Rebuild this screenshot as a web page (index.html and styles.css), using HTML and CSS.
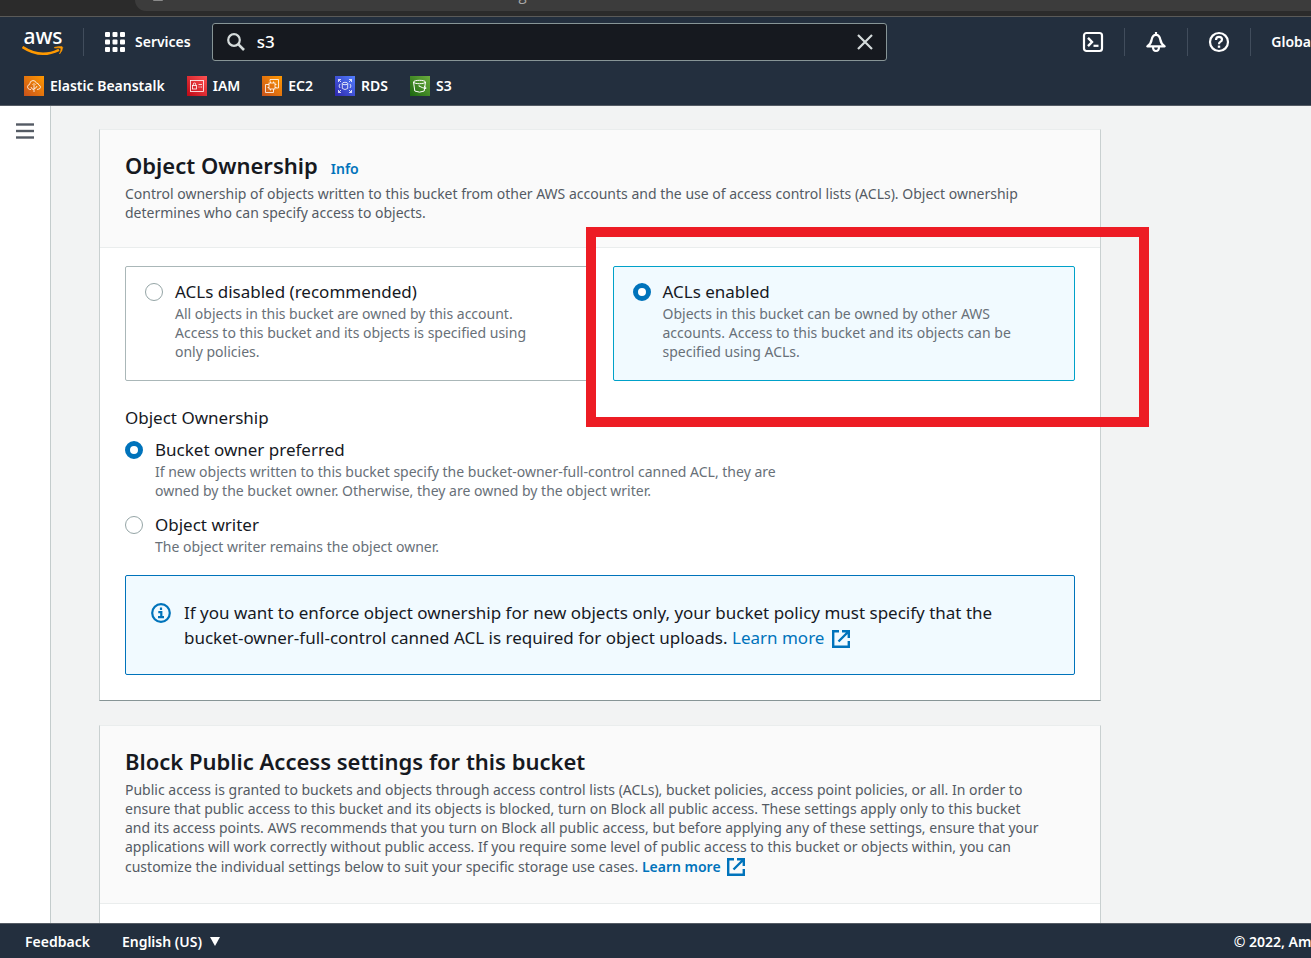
FILE: index.html
```html
<!DOCTYPE html>
<html lang="en">
<head>
<meta charset="utf-8">
<title>Create bucket - S3</title>
<link rel="stylesheet" href="styles.css">
</head>
<body>
<div class="browser-bar">
  <div class="address">
    <svg class="lock" width="10" height="14" viewBox="0 0 10 14"><rect y="5" width="10" height="9" rx="1" fill="#8a8a8a"/></svg>
    <span class="url">s3.console.aws.amazon.com/s3/bucket/create?region=</span>
  </div>
</div>

<header class="top">
  <div class="nav">
    <a class="logo" href="#" aria-label="AWS home">
      <span class="logo-text">aws</span>
      <svg class="smile" width="42" height="11" viewBox="0 0 42 11"><path d="M.5 1Q18.500 13 37 3.800" fill="none" stroke="#f90" stroke-width="2.600"/><path d="M32.500 1.300Q40.500-.5 40.700 1.300Q40.700 4.500 37.500 8Q39.500 3 38.800 2.200Q38 1.500 32.500 2z" fill="#f90" stroke="#f90" stroke-width=".6"/></svg>
    </a>
    <span class="rule"></span>
    <button class="services" type="button">
      <svg width="20" height="20" viewBox="0 0 20 20" fill="#fff"><rect width="5" height="5" rx="1"/><rect x="7.500" width="5" height="5" rx="1"/><rect x="15" width="5" height="5" rx="1"/><rect y="7.500" width="5" height="5" rx="1"/><rect x="7.500" y="7.500" width="5" height="5" rx="1"/><rect x="15" y="7.500" width="5" height="5" rx="1"/><rect y="15" width="5" height="5" rx="1"/><rect x="7.500" y="15" width="5" height="5" rx="1"/><rect x="15" y="15" width="5" height="5" rx="1"/></svg>
      Services
    </button>
    <div class="search">
      <svg width="18" height="18" viewBox="0 0 18 18" fill="none" stroke="#d5dbdb" stroke-width="2.200"><circle cx="7" cy="7" r="5.800"/><path d="M11.200 11.200L17 17" stroke-width="2.600"/></svg>
      <input class="search-input" type="text" value="s3" aria-label="Search">
      <button class="icon-button" type="button" aria-label="Clear search"><svg width="16" height="16" viewBox="0 0 16 16" fill="none" stroke="#d5dbdb" stroke-width="2.200"><path d="M1 1L15 15M15 1L1 15"/></svg></button>
    </div>
    <div class="tools">
      <button class="icon-button" type="button" aria-label="CloudShell"><svg width="22" height="22" viewBox="0 0 22 22" fill="none" stroke="#fff" stroke-width="2.200"><rect x="2" y="2" width="18" height="18" rx="2.500"/><path d="M6 6.800L10 11L6 15.200" stroke-width="2.400"/><path d="M11.500 14.800H16.500"/></svg></button>
      <span class="rule"></span>
      <button class="icon-button" type="button" aria-label="Notifications"><svg width="22" height="22" viewBox="0 0 22 22" fill="none" stroke="#fff" stroke-width="2.200" stroke-linejoin="round"><path d="M11 1V3M2.300 15.300H19.700Q15.800 12.500 15.300 8.500Q14.500 3.800 11 3.800Q7.500 3.800 6.700 8.500Q6.200 12.500 2.300 15.300z"/><path d="M8 16Q8 20 11 20Q14 20 14 16"/></svg></button>
      <span class="rule"></span>
      <button class="icon-button" type="button" aria-label="Help"><svg width="22" height="22" viewBox="0 0 22 22" fill="none" stroke="#fff" stroke-width="2.200"><circle cx="11" cy="11" r="9"/><path d="M8 9Q8 5.800 11 5.800Q14 5.800 14 8.500Q14 10 12.300 10.900Q11 11.600 11 13.300"/><path d="M11 14.600V16.800" stroke-width="2.400"/></svg></button>
      <span class="rule"></span>
      <button class="region" type="button">Global</button>
    </div>
  </div>
  <nav class="favorites">
    <a href="#"><svg width="20" height="20" viewBox="0 0 20 20" fill="none" stroke="#fff"><defs><linearGradient id="orange" x1="0" y1="1" x2="1" y2="0"><stop stop-color="#c8511b"/><stop offset="1" stop-color="#f90"/></linearGradient><linearGradient id="red" x1="0" y1="1" x2="1" y2="0"><stop stop-color="#bd0816"/><stop offset="1" stop-color="#ff5252"/></linearGradient><linearGradient id="blue" x1="0" y1="1" x2="1" y2="0"><stop stop-color="#2e27ad"/><stop offset="1" stop-color="#527fff"/></linearGradient><linearGradient id="green" x1="0" y1="1" x2="1" y2="0"><stop stop-color="#1b660f"/><stop offset="1" stop-color="#6cae3e"/></linearGradient></defs><rect width="20" height="20" fill="url(#orange)" stroke="none"/><g stroke-width=".8"><path d="M7 13.500H5.800Q3.500 13 3.500 10.800Q3.500 9 5.500 8.500Q6 4.500 9 4.500Q11.500 4.500 12.500 7.200Q14.500 7 14.700 9Q16.500 9.500 16.500 11.200Q16.300 13.500 13 13.500"/><path d="M10 16V9M7 11Q7.500 13.500 10 13.500M13 10Q12.500 12.500 10 12.500M8.500 9L10 7.500L11.500 9"/></g></svg>Elastic Beanstalk</a>
    <a href="#"><svg width="20" height="20" viewBox="0 0 20 20" fill="none" stroke="#fff"><rect width="20" height="20" fill="url(#red)" stroke="none"/><g stroke-width=".8"><rect x="3.500" y="4.500" width="13" height="11"/><rect x="5.500" y="9.500" width="4" height="3.500"/><path d="M6.300 9.500V8Q6.300 7 7.500 7Q8.700 7 8.700 8V9.500M11.500 8.500H15M11.500 11H12.500M13.500 11H15"/></g></svg>IAM</a>
    <a href="#"><svg width="20" height="20" viewBox="0 0 20 20" fill="none" stroke="#fff"><rect width="20" height="20" fill="url(#orange)" stroke="none"/><g stroke-width=".8"><path d="M8 5.500V3.500H16.500V12H14M11.500 14V16.500H3.500V8.500H6"/><rect x="7" y="7" width="6" height="6"/><path d="M8.500 5.500V7M11.500 5.500V7M8.500 13V14.500M11.500 13V14.500M5.500 8.500H7M5.500 11.500H7M13 8.500H14.500M13 11.500H14.500"/></g></svg>EC2</a>
    <a href="#"><svg width="20" height="20" viewBox="0 0 20 20" fill="none" stroke="#fff"><rect width="20" height="20" fill="url(#blue)" stroke="none"/><g stroke-width=".8"><path d="M3.500 6V3.500H6M3.500 3.500L6 6M14 3.500H16.500V6M16.500 3.500L14 6M3.500 14V16.500H6M3.500 16.500L6 14M14 16.500H16.500V14M16.500 16.500L14 14M5 8Q3 10 5 12M15 8Q17 10 15 12"/><ellipse cx="10" cy="7.500" rx="2.700" ry="1.200"/><path d="M7.300 7.500V12.500Q10 14.500 12.700 12.500V7.500"/></g></svg>RDS</a>
    <a href="#"><svg width="20" height="20" viewBox="0 0 20 20" fill="none" stroke="#fff"><rect width="20" height="20" fill="url(#green)" stroke="none"/><ellipse cx="9.500" cy="6" rx="6" ry="1.700"/><path d="M3.500 6L4.800 15Q9.500 17.300 14.200 15L15.500 6M9 10Q13 12.300 16 12.500Q16.500 11.500 14 10M8.500 9.800H9.500"/></svg>S3</a>
  </nav>
</header>

<div class="shell">
  <aside class="side">
    <button class="icon-button" type="button" aria-label="Open navigation"><svg width="18" height="16" viewBox="0 0 18 16" fill="#545b64"><rect y=".3" width="18" height="2.400"/><rect y="6.800" width="18" height="2.400"/><rect y="13.300" width="18" height="2.400"/></svg></button>
  </aside>
  <main class="content">
    <section class="panel">
      <div class="panel-head">
        <div class="title-row"><h2>Object Ownership</h2><a class="link info" href="#">Info</a></div>
        <p class="description">Control ownership of objects written to this bucket from other AWS accounts and the use of access control lists (ACLs). Object ownership<br>determines who can specify access to objects.</p>
      </div>
      <div class="panel-body">
        <div class="tiles">
          <label class="tile choice">
            <input type="radio" name="acl">
            <span><span class="choice-title">ACLs disabled (recommended)</span><span class="hint">All objects in this bucket are owned by this account.<br>Access to this bucket and its objects is specified using<br>only policies.</span></span>
          </label>
          <div class="highlighted">
            <label class="tile choice selected">
              <input type="radio" name="acl" checked>
              <span><span class="choice-title">ACLs enabled</span><span class="hint">Objects in this bucket can be owned by other AWS<br>accounts. Access to this bucket and its objects can be<br>specified using ACLs.</span></span>
            </label>
            <div class="marker"></div>
          </div>
        </div>
        <fieldset class="ownership">
          <legend>Object Ownership</legend>
          <label class="choice">
            <input type="radio" name="owner" checked>
            <span><span class="choice-title">Bucket owner preferred</span><span class="hint">If new objects written to this bucket specify the bucket-owner-full-control canned ACL, they are<br>owned by the bucket owner. Otherwise, they are owned by the object writer.</span></span>
          </label>
          <label class="choice">
            <input type="radio" name="owner">
            <span><span class="choice-title">Object writer</span><span class="hint">The object writer remains the object owner.</span></span>
          </label>
        </fieldset>
        <div class="alert">
          <svg class="alert-icon" width="20" height="20" viewBox="0 0 20 20" fill="none" stroke="#0073bb" stroke-width="2.200"><circle cx="10" cy="10" r="8.800"/><path d="M10 4.500V7M7.300 9.200H10.300V14M7 14.200H13" stroke-width="2.200"/></svg>
          <p>If you want to enforce object ownership for new objects only, your bucket policy must specify that the<br>bucket-owner-full-control canned ACL is required for object uploads. <a class="link" href="#">Learn more <svg class="external" width="18" height="18" viewBox="0 0 18 18" fill="none" stroke="#0073bb" stroke-width="2.400"><path d="M7 1.200H1.200V16.800H16.800V11M10 1.200H16.800V8M16.500 1.500L6.500 11.500"/></svg></a></p>
        </div>
      </div>
    </section>

    <section class="panel">
      <div class="panel-head">
        <h2>Block Public Access settings for this bucket</h2>
        <p class="description">Public access is granted to buckets and objects through access control lists (ACLs), bucket policies, access point policies, or all. In order to<br>ensure that public access to this bucket and its objects is blocked, turn on Block all public access. These settings apply only to this bucket<br>and its access points. AWS recommends that you turn on Block all public access, but before applying any of these settings, ensure that your<br>applications will work correctly without public access. If you require some level of public access to this bucket or objects within, you can<br>customize the individual settings below to suit your specific storage use cases. <a class="link strong" href="#">Learn more <svg class="external" width="18" height="18" viewBox="0 0 18 18" fill="none" stroke="#0073bb" stroke-width="2.400"><path d="M7 1.200H1.200V16.800H16.800V11M10 1.200H16.800V8M16.500 1.500L6.500 11.500"/></svg></a></p>
      </div>
      <div class="panel-body"></div>
    </section>
  </main>
</div>

<footer class="footer">
  <a href="#">Feedback</a>
  <button class="language" type="button">English (US)<svg width="10" height="9" viewBox="0 0 10 9"><path d="M0 0H10L5 9z" fill="#fff"/></svg></button>
  <span class="copyright">© 2022, Amazon</span>
</footer>
</body>
</html>
```

FILE: styles.css
```css
* { box-sizing: border-box; }
body {
  margin: 0;
  height: 100vh;
  display: flex;
  flex-direction: column;
  overflow: hidden;
  font: 17px/24px "Noto Sans", sans-serif;
  color: #16191f;
  background: #f2f3f3;
}
h2, p { margin: 0; }
svg { flex: none; }
button { padding: 0; border: 0; background: none; color: inherit; font: inherit; }
.icon-button { display: flex; }

.browser-bar {
  flex: none;
  height: 17px;
  padding: 0 0 5px 135px;
  background: #2b2b2b;
  border-bottom: 1px solid #5a5a58;
  overflow: hidden;
}
.address {
  display: flex;
  align-items: flex-end;
  gap: 13px;
  height: 11px;
  padding: 0 18px 8px;
  border-bottom-left-radius: 16px;
  background: #3c3c3c;
}
.lock { margin-bottom: 2px; }
.url { font: 15px/18px "Open Sans", sans-serif; color: #a8a8a8; }

.top {
  flex: none;
  height: 89px;
  background: #232f3e;
  border-bottom: 1px solid #545b64;
  color: #fff;
  font-size: 14px;
  font-weight: 600;
}
.nav {
  display: flex;
  align-items: center;
  height: 50px;
  padding-left: 22px;
}
.logo {
  display: flex;
  flex-direction: column;
  gap: 1px;
  width: 42px;
  margin-right: 19px;
  color: #fff;
  text-decoration: none;
}
.logo-text { font-size: 21px; line-height: 18px; font-weight: 500; text-align: center; }
.rule { width: 1px; height: 28px; background: #414d5c; }
.services { display: flex; align-items: center; gap: 10px; margin: 0 21px; }
.search {
  display: flex;
  align-items: center;
  gap: 12px;
  flex: 0 1 675px;
  height: 38px;
  padding: 0 13px 0 14px;
  border: 1px solid #879596;
  border-radius: 3px;
  background: #16191f;
}
.search-input {
  flex: 1;
  min-width: 0;
  padding: 0;
  border: 0;
  outline: 0;
  background: none;
  color: #fff;
  font: 500 17px/24px "Noto Sans", sans-serif;
}
.tools { display: flex; align-items: center; gap: 20px; margin-left: auto; margin-right: -4px; }
.favorites { display: flex; gap: 22px; padding: 7px 24px; }
.favorites a {
  display: flex;
  align-items: center;
  gap: 6px;
  color: #fff;
  text-decoration: none;
}

.shell { flex: 1; min-height: 0; display: flex; }
.side {
  flex: none;
  width: 51px;
  padding: 17px 16px;
  background: #fff;
  border-right: 1px solid #c4cccc;
}
.content {
  flex: 1;
  display: flex;
  flex-direction: column;
  gap: 24px;
  padding: 23px 48px;
  overflow: auto;
  scrollbar-width: none;
}
.panel {
  flex: none;
  max-width: 1002px;
  background: #fff;
  border: 1px solid #c9d0d0;
  border-top-color: #eaeded;
  border-bottom-color: #879596;
}
.panel-head {
  padding: 21px 25px 25px;
  background: #fafafa;
  border-bottom: 1px solid #eaeded;
}
.title-row { display: flex; align-items: baseline; gap: 13px; }
h2 { font-size: 22px; line-height: 28px; font-weight: 600; }
.description, .hint, .info { font-size: 14px; line-height: 19px; }
.description { padding-top: 5px; color: #545b64; }
.link { color: #0073bb; text-decoration: none; }
.info, .strong { font-weight: 600; }
.external { margin: 2px 0 2px 3px; vertical-align: -6px; }
.panel-body { padding: 18px 25px 25px; }

.tiles { display: grid; grid-template-columns: 1fr 1fr; gap: 25px; }
.choice { display: flex; gap: 12px; }
.choice-title, .hint { display: block; }
.hint { color: #687078; }
.tile { padding: 13px 19px 19px; border: 1px solid #aab7b8; border-radius: 2px; }
.selected { background: #f1faff; border-color: #00a1c9; }
.highlighted { position: relative; }
.marker {
  position: absolute;
  inset: -39px -74px -46px -27px;
  border: 10px solid #ed1c24;
  pointer-events: none;
}
input[type="radio"] {
  appearance: none;
  flex: none;
  width: 18px;
  height: 18px;
  margin: 3px 0 0;
  border: 1px solid #95a5a6;
  border-radius: 50%;
  background: #fff;
}
input[type="radio"]:checked { border: 5px solid #0073bb; }

.ownership {
  display: flex;
  flex-direction: column;
  gap: 13px;
  margin: 25px 0 19px;
  padding: 0;
  border: 0;
}
legend { padding: 0 0 8px; }
.alert {
  display: flex;
  gap: 13px;
  padding: 24px 25px;
  border: 1px solid #0073bb;
  border-radius: 2px;
  background: #f1faff;
}
.alert p { line-height: 25px; }
.alert-icon { margin-top: 3px; }

.footer {
  flex: none;
  display: flex;
  align-items: center;
  gap: 32px;
  height: 35px;
  padding: 1px 0 0 25px;
  background: #232f3e;
  border-top: 1px solid #545b64;
  color: #fff;
  font-size: 14px;
  font-weight: 600;
  white-space: nowrap;
}
.footer a { color: #fff; text-decoration: none; }
.language { display: flex; align-items: center; gap: 8px; }
.copyright { margin-left: auto; margin-right: -33px; }
```
